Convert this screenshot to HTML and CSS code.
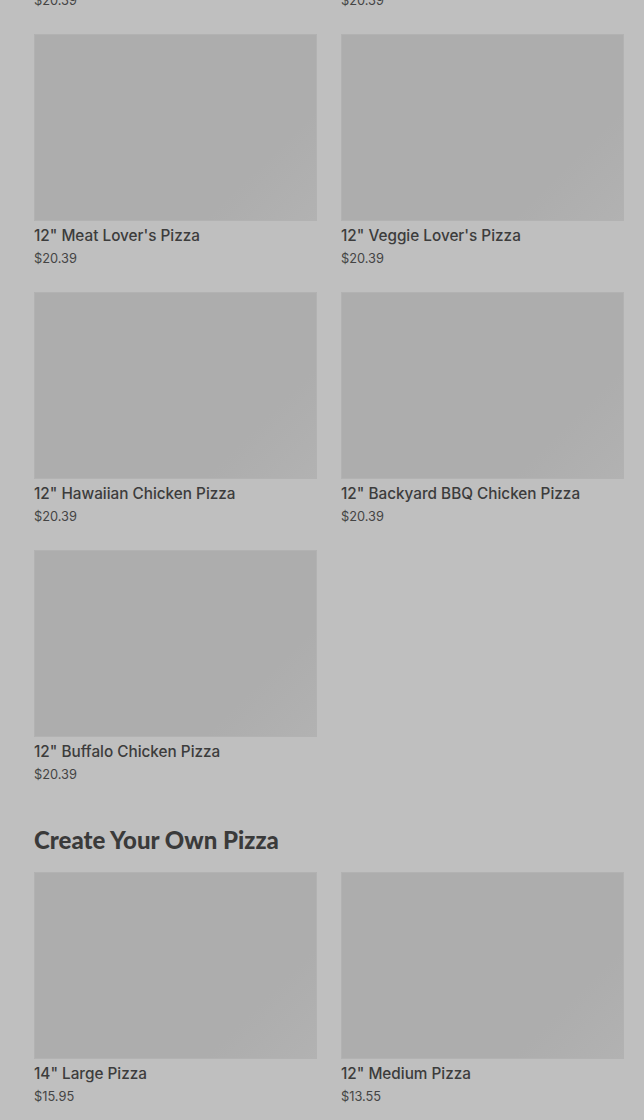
FILE: index.html
```html
<!DOCTYPE html>
<html lang="en">
<head>
    <meta charset="UTF-8">
    <meta name="viewport" content="width=device-width, initial-scale=1.0">
    <title>Menu - Pizza</title>
    <link rel="stylesheet" href="styles.css">
</head>
<body>

<div class="menu">
    <!-- Specialty pizzas (scrolled part way) -->
    <section class="category">
        <div class="item-grid scrolled">
            <div class="item">
                <div class="item-photo"></div>
                <p class="item-name">12" Pepperoni Pizza</p>
                <p class="item-price">$20.39</p>
            </div>
            <div class="item">
                <div class="item-photo"></div>
                <p class="item-name">12" Supreme Pizza</p>
                <p class="item-price">$20.39</p>
            </div>
            <div class="item">
                <div class="item-photo"></div>
                <p class="item-name">12" Meat Lover's Pizza</p>
                <p class="item-price">$20.39</p>
            </div>
            <div class="item">
                <div class="item-photo"></div>
                <p class="item-name">12" Veggie Lover's Pizza</p>
                <p class="item-price">$20.39</p>
            </div>
            <div class="item">
                <div class="item-photo"></div>
                <p class="item-name">12" Hawaiian Chicken Pizza</p>
                <p class="item-price">$20.39</p>
            </div>
            <div class="item">
                <div class="item-photo"></div>
                <p class="item-name">12" Backyard BBQ Chicken Pizza</p>
                <p class="item-price">$20.39</p>
            </div>
            <div class="item">
                <div class="item-photo"></div>
                <p class="item-name">12" Buffalo Chicken Pizza</p>
                <p class="item-price">$20.39</p>
            </div>
        </div>
    </section>

    <section class="category">
        <h2 class="category-title">Create Your Own Pizza</h2>
        <div class="item-grid">
            <div class="item">
                <div class="item-photo"></div>
                <p class="item-name">14" Large Pizza</p>
                <p class="item-price">$15.95</p>
            </div>
            <div class="item">
                <div class="item-photo"></div>
                <p class="item-name">12" Medium Pizza</p>
                <p class="item-price">$13.55</p>
            </div>
        </div>
    </section>
</div>

</body>
</html>
```

FILE: styles.css
```css
/* General styles */
* {
    box-sizing: border-box;
    margin: 0;
    padding: 0;
}
body {
    font-family: Inter, "Liberation Sans", sans-serif;
    background-color: #bfbfbf; /* page seen through the modal backdrop */
    color: #3a3a3a;
    overflow: hidden;
}
.menu {
    padding: 0 20px 0 34px;
}

/* Category sections */
.category + .category {
    margin-top: 40px;
}
.category-title {
    font-family: Lato, "Open Sans", sans-serif;
    font-size: 24px;
    font-weight: 900;
    line-height: 32px;
    color: #3a3a3a;
    margin-bottom: 16px;
}

/* Item grid */
.item-grid {
    display: grid;
    grid-template-columns: 1fr 1fr;
    column-gap: 24px;
    row-gap: 24px;
}
.item-grid.scrolled {
    margin-top: -224px; /* list is scrolled */
}
.item-photo {
    height: 187px;
    background: linear-gradient(135deg, #adadad 76%, #b2b2b2 100%);
    box-shadow: inset 0 0 0 1px #b2b2b2;
    border-radius: 1px;
}
.item-name {
    margin-top: 5px;
    font-size: 15.3px;
    line-height: 20px;
    font-weight: 500;
    color: #3c3c3c;
}
.item-price {
    margin-top: 4px;
    font-size: 12.8px;
    line-height: 18px;
    color: #444;
}
```
